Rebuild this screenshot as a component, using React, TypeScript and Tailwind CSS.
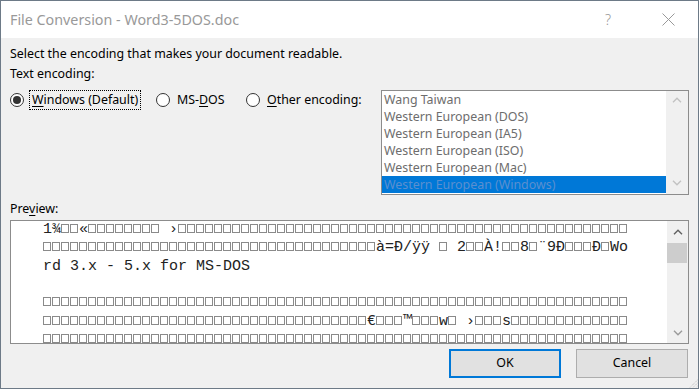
import React from "react";

const BOX = "□";

const previewLines: string[] = [
  "1¾□□«□□□□□□□□ ›" + BOX.repeat(50),
  BOX.repeat(37) + "à=Ð/ÿÿ □ 2□□À!□□8□¨9Ð□□□Ð□Wo",
  "rd 3.x - 5.x for MS-DOS",
  "",
  BOX.repeat(65),
  BOX.repeat(36) + "€□□□™□□□w□ ›□□□s" + BOX.repeat(13),
  BOX.repeat(65),
];

const encodings = [
  "Wang Taiwan",
  "Western European (DOS)",
  "Western European (IA5)",
  "Western European (ISO)",
  "Western European (Mac)",
  "Western European (Windows)",
];

// missing-glyph boxes, drawn as little outlined rects on the baseline
const PreviewLine: React.FC<{ text: string }> = ({ text }) => {
  const parts: React.ReactNode[] = [];
  let run = "";
  Array.from(text).forEach((ch, i) => {
    if (ch === BOX) {
      if (run) {
        parts.push(<span key={`t${i}`}>{run}</span>);
        run = "";
      }
      parts.push(
        <span
          key={`b${i}`}
          className="inline-block w-[8px] h-[9px] mr-[1px] border border-[#8a8a8a]"
        />
      );
    } else {
      run += ch;
    }
  });
  if (run) parts.push(<span key="end">{run}</span>);
  return <div className="h-[18.33px] whitespace-pre">{parts.length ? parts : " "}</div>;
};

const Chevron: React.FC<{ up?: boolean; color: string }> = ({ up, color }) => (
  <svg width="10" height="6" viewBox="0 0 10 6">
    <polyline
      points={up ? "1,5.2 5,1.2 9,5.2" : "1,0.8 5,4.8 9,0.8"}
      fill="none"
      stroke={color}
      strokeWidth="1.4"
    />
  </svg>
);

const Radio: React.FC<{ checked?: boolean }> = ({ checked }) => (
  <span className="w-[14px] h-[14px] rounded-full border border-[#333333] bg-white flex items-center justify-center shrink-0">
    {checked && <span className="w-[8px] h-[8px] rounded-full bg-[#333333]" />}
  </span>
);

export default function App() {
  return (
    <div className="relative w-[699px] h-[389px] border border-[#6d7a87] bg-[#f0f0f0] flex flex-col overflow-hidden font-['Noto_Sans',sans-serif] text-[12.4px] text-black">
      <header className="h-[37px] bg-white flex items-center pl-[9px] pr-[23px] text-[14.3px] text-[#999999] shrink-0">
        <span className="flex-1">File Conversion - Word3-5DOS.doc</span>
        <span className="w-[14px] text-center font-light">?</span>
        <svg width="13" height="13" viewBox="0 0 13 13" className="ml-[47px]">
          <path d="M0.5 0.5 L12.5 12.5 M12.5 0.5 L0.5 12.5" stroke="#999999" strokeWidth="1" />
        </svg>
      </header>

      <main className="flex-1 flex flex-col px-[9px] pt-[6px]">
        <p className="leading-[20px]">Select the encoding that makes your document readable.</p>
        <p className="leading-[20px]">Text encoding:</p>

        <div className="flex items-start pt-[6px]">
          <div className="flex items-center h-[20px] leading-[20px]">
            <label className="flex items-center w-[146px]">
              <Radio checked />
              <span className="ml-[5px] h-[20px] px-[2px] border border-dotted border-black flex items-center">
                <span className="underline underline-offset-2">W</span>indows (Default)
              </span>
            </label>
            <label className="flex items-center w-[90px]">
              <Radio />
              <span className="ml-[7px]">
                MS-<span className="underline underline-offset-2">D</span>OS
              </span>
            </label>
            <label className="flex items-center">
              <Radio />
              <span className="ml-[7px]">
                <span className="underline underline-offset-2">O</span>ther encoding:
              </span>
            </label>
          </div>

          <div className="ml-auto w-[308px] h-[105px] border border-[#8c8c8c] bg-white flex">
            <ul className="w-[284px] text-[#6d6d6d]">
              {encodings.map((name, i) => (
                <li
                  key={name}
                  className={
                    i === encodings.length - 1
                      ? "h-[17px] leading-[17px] pl-[2px] whitespace-nowrap bg-[#0078d7] text-[#5b8fcf]"
                      : "h-[17px] leading-[17px] pl-[2px] whitespace-nowrap"
                  }
                >
                  {name}
                </li>
              ))}
            </ul>
            <div className="w-[22px] bg-[#f0f0f0] flex flex-col items-center justify-between pt-[6px] pb-[8px]">
              <Chevron up color="#c2c2c2" />
              <Chevron color="#c2c2c2" />
            </div>
          </div>
        </div>

        <p className="leading-[20px] mt-[4px]">
          Pre<span className="underline underline-offset-2">v</span>iew:
        </p>

        <div className="mt-[1px] h-[124px] border border-[#8c8c8c] bg-white flex">
          <div className="flex-1 overflow-hidden pl-[32px]">
            <div className="font-['Liberation_Mono',monospace] text-[15px] leading-[18.33px] text-[#222222]">
              {previewLines.map((line, i) => (
                <PreviewLine key={i} text={line} />
              ))}
            </div>
          </div>
          <div className="w-[21px] bg-[#f0f0f0] flex flex-col">
            <div className="h-[21px] flex items-center justify-center">
              <Chevron up color="#606060" />
            </div>
            <div className="mt-[1px] h-[20px] mr-[1px] bg-[#cdcdcd]" />
            <div className="flex-1" />
            <div className="h-[21px] flex items-center justify-center">
              <Chevron color="#9a9a9a" />
            </div>
          </div>
        </div>

        <div className="mt-[5px] flex justify-end gap-[15px] pr-[1px]">
          <button className="w-[112px] h-[29px] bg-[#e1e1e1] border-2 border-[#0078d7] flex items-center justify-center">
            OK
          </button>
          <button className="w-[112px] h-[29px] bg-[#e1e1e1] border border-[#adadad] flex items-center justify-center">
            Cancel
          </button>
        </div>
      </main>

      <svg width="9" height="9" viewBox="0 0 9 9" className="absolute right-0 bottom-0">
        <path d="M8.5 1 L1 8.5 M8.5 4 L4 8.5 M8.5 7 L7 8.5" stroke="#b5b5b5" strokeWidth="1" strokeDasharray="1 1" />
      </svg>
    </div>
  );
}
